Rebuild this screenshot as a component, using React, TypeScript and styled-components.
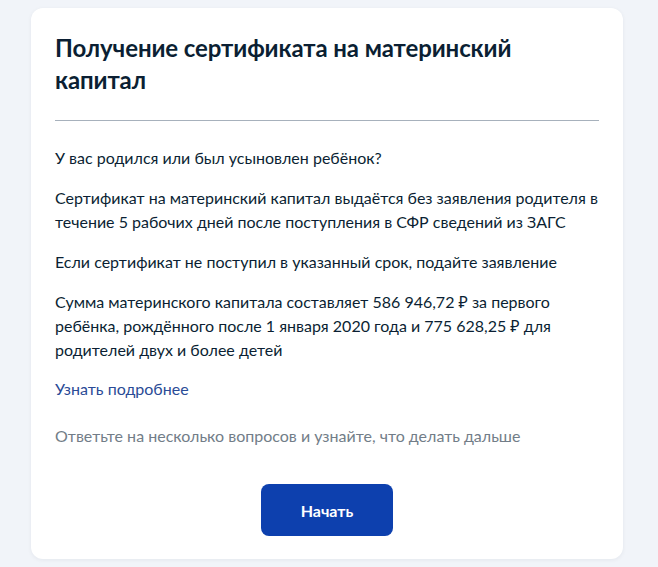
import React from "react";
import styled, { createGlobalStyle } from "styled-components";

const GlobalStyle = createGlobalStyle`
  html, body {
    margin: 0;
    padding: 0;
    background: #f1f4f9;
  }
  body {
    font-family: Lato, "Noto Sans", "Liberation Sans", sans-serif;
    color: #0b1f33;
    -webkit-font-smoothing: antialiased;
  }
`;

const Page = styled.div`
  width: 658px;
  height: 567px;
  padding: 8px 35px 0 31px;
  box-sizing: border-box;
`;

const Card = styled.section`
  background: #ffffff;
  border-radius: 12px;
  box-shadow: 0 1px 4px rgba(11, 31, 51, 0.06);
  padding: 24px 24px 23px;
  display: flex;
  flex-direction: column;
`;

const Title = styled.h1`
  margin: 0;
  font-size: 24px;
  line-height: 32px;
  font-weight: 700;
  color: #0b1f33;
  letter-spacing: -0.1px;
`;

const Divider = styled.hr`
  margin: 24px 0 25px;
  border: 0;
  height: 1px;
  background: #a7b1bc;
`;

const Body = styled.div`
  display: flex;
  flex-direction: column;
  gap: 16px;
`;

const Text = styled.p<{ $muted?: boolean }>`
  margin: 0;
  font-size: 16px;
  line-height: 24px;
  color: ${(p) => (p.$muted ? "#727d88" : "#0b1f33")};
`;

const MoreLink = styled.a`
  margin-top: -1px;
  font-size: 16px;
  line-height: 24px;
  color: #2a4b96;
  text-decoration: none;
  align-self: flex-start;
`;

const Hint = styled(Text)`
  margin-top: 7px;
`;

const Actions = styled.div`
  display: flex;
  justify-content: center;
  margin-top: 36px;
`;

const StartButton = styled.button`
  width: 132px;
  height: 52px;
  border: 0;
  border-radius: 8px;
  background: #0d40ae;
  color: #ffffff;
  font-family: inherit;
  font-size: 16px;
  font-weight: 700;
  cursor: pointer;
`;

export default function App() {
  return (
    <>
      <GlobalStyle />
      <Page>
        <Card>
          <Title>Получение сертификата на материнский капитал</Title>
          <Divider />
          <Body>
            <Text>У вас родился или был усыновлен ребёнок?</Text>
            <Text>
              Сертификат на материнский капитал выдаётся без заявления родителя в
              течение 5 рабочих дней после поступления в СФР сведений из ЗАГС
            </Text>
            <Text>Если сертификат не поступил в указанный срок, подайте заявление</Text>
            <Text>
              Сумма материнского капитала составляет 586 946,72 ₽ за первого
              ребёнка, рождённого после 1 января 2020 года и 775 628,25 ₽ для
              родителей двух и более детей
            </Text>
            <MoreLink href="#">Узнать подробнее</MoreLink>
            <Hint $muted>Ответьте на несколько вопросов и узнайте, что делать дальше</Hint>
          </Body>
          <Actions>
            <StartButton>Начать</StartButton>
          </Actions>
        </Card>
      </Page>
    </>
  );
}
